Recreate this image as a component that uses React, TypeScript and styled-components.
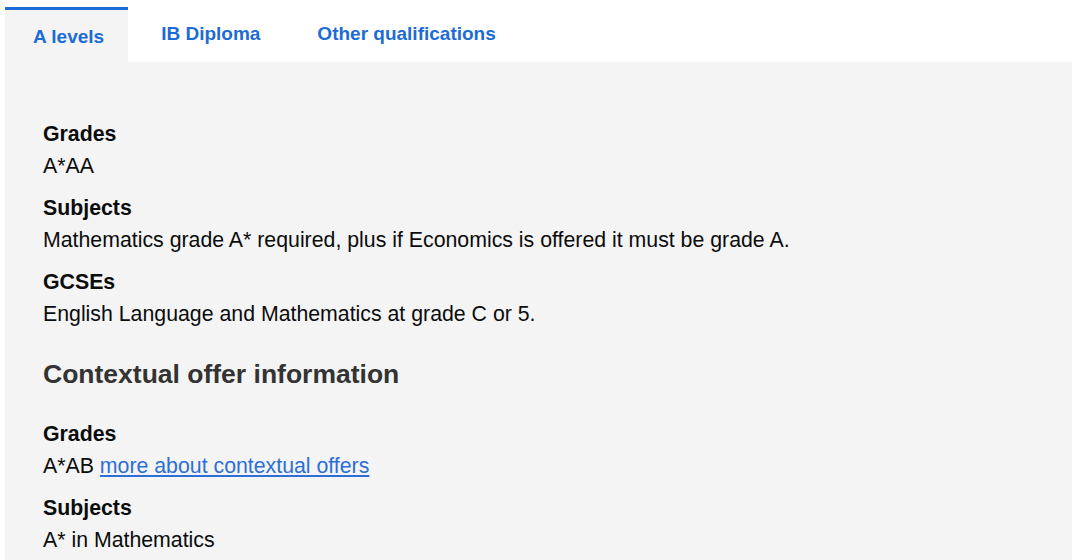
import * as React from 'react';
import styled, { createGlobalStyle } from 'styled-components';

const GlobalStyle = createGlobalStyle`
  body {
    margin: 0;
    background: #fff;
    font-family: "Liberation Sans", Arial, sans-serif;
  }
`;

const Root = styled.div`
  width: 1067px;
  height: 100vh;
  margin-left: 5px;
  padding-top: 7px;
  box-sizing: border-box;
  display: flex;
  flex-direction: column;
  overflow: hidden;
`;

const TabList = styled.div`
  display: flex;
  align-items: flex-end;
  gap: 5px;
`;

const Tab = styled.button<{ $active?: boolean }>`
  display: flex;
  align-items: flex-start;
  height: 55px;
  padding: ${p => (p.$active ? '17px' : '14px')} 24px 0 28px;
  border: 0;
  border-top: 3px solid ${p => (p.$active ? '#1d6bd4' : 'transparent')};
  background: ${p => (p.$active ? '#f4f4f4' : 'transparent')};
  color: #1d6bd4;
  font-family: inherit;
  font-size: 19px;
  font-weight: 700;
  line-height: 1;
  cursor: pointer;
  box-sizing: border-box;
`;

const Panel = styled.div`
  flex: 1;
  background: #f4f4f4;
  padding: 57px 38px 40px;
`;

const Label = styled.div`
  color: #0b0c0c;
  font-size: 21.3px;
  font-weight: 700;
  line-height: 30px;
`;

const Value = styled.div`
  margin: 2px 0 12px;
  color: #0b0c0c;
  font-size: 21.3px;
  line-height: 30px;
`;

const Heading = styled.h2`
  margin: 27px 0 27px;
  color: #333;
  font-size: 26.5px;
  font-weight: 700;
  line-height: 36px;
`;

const Link = styled.a`
  color: #2c6fd6;
  text-decoration: underline;
  text-underline-offset: 2px;
`;

export default function App() {
  return (
    <Root>
      <GlobalStyle />
      <TabList>
        <Tab $active>A levels</Tab>
        <Tab>IB Diploma</Tab>
        <Tab>Other qualifications</Tab>
      </TabList>
      <Panel>
        <Label>Grades</Label>
        <Value>A*AA</Value>
        <Label>Subjects</Label>
        <Value>Mathematics grade A* required, plus if Economics is offered it must be grade A.</Value>
        <Label>GCSEs</Label>
        <Value>English Language and Mathematics at grade C or 5.</Value>
        <Heading>Contextual offer information</Heading>
        <Label>Grades</Label>
        <Value>
          A*AB <Link href="#">more about contextual offers</Link>
        </Value>
        <Label>Subjects</Label>
        <Value>A* in Mathematics</Value>
      </Panel>
    </Root>
  );
}
